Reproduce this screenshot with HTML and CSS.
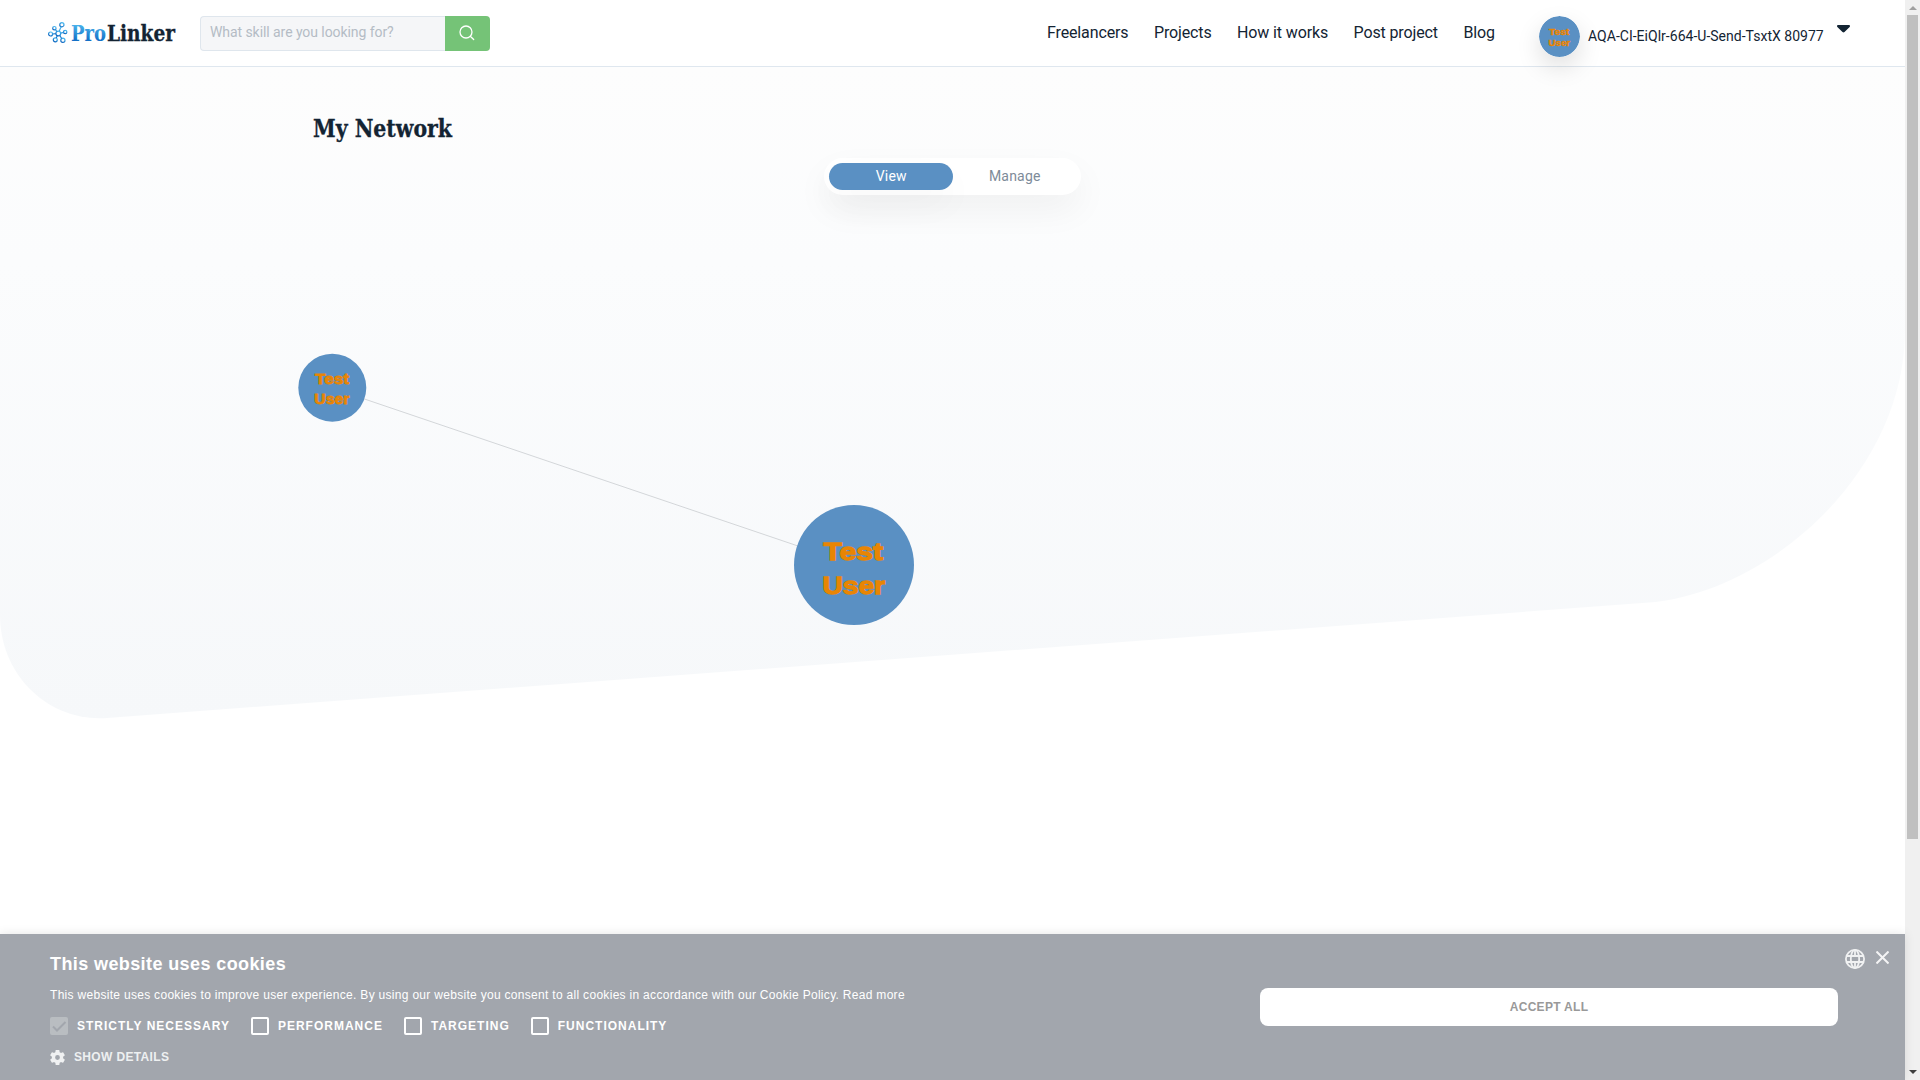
FILE: index.html
```html
<!DOCTYPE html>
<html lang="en">
<head>
<meta charset="utf-8">
<title>My Network - ProLinker</title>
<link rel="stylesheet" href="styles.css">
</head>
<body>
<div class="page">
  <header class="header">
    <a class="logo">
      <svg class="logo-mark" viewBox="0 0 20 21">
        <defs><linearGradient id="lg" x1="0.8" y1="0" x2="0.2" y2="1"><stop offset="0" stop-color="#4fc0f5"/><stop offset="1" stop-color="#0a62bd"/></linearGradient></defs>
        <g fill="none" stroke="url(#lg)" stroke-width="1.2">
          <circle cx="10.3" cy="11.5" r="2.4"/><circle cx="13.9" cy="2.700" r="2.1"/><circle cx="6.400" cy="6.200" r="1.700"/><circle cx="2.600" cy="12" r="2"/><circle cx="7.300" cy="17.800" r="2"/><circle cx="14.900" cy="18.200" r="2.100"/><circle cx="17.200" cy="10" r="1.700"/>
          <path d="M13.200 4.600 11.200 9.300M7.400 7.500 8.900 9.600M4.500 12 8 11.700M8.100 16 9.400 13.700M13.700 16.500 11.700 13.400M15.500 10.300 12.600 11.100"/>
        </g>
      </svg>
      <svg class="logo-text" viewBox="0 0 112 28">
        <defs><linearGradient id="tg" x1="0" y1="0" x2="0" y2="1"><stop offset="0.1" stop-color="#4db7ee"/><stop offset="0.9" stop-color="#0a64c0"/></linearGradient></defs>
        <text class="slab" x="0" y="19" textLength="35" lengthAdjust="spacingAndGlyphs" fill="url(#tg)">Pro</text>
        <text class="slab dark" x="36" y="19" textLength="68" lengthAdjust="spacingAndGlyphs">Linker</text>
      </svg>
    </a>
    <div class="search">
      <span class="search-input">What skill are you looking for?</span>
      <span class="search-btn"><svg viewBox="0 0 16 16" width="16" height="16" fill="none" stroke="#fff" stroke-width="1.3" stroke-linecap="round"><circle cx="7" cy="7" r="6"/><path d="m11.500 11.500 3.200 3"/></svg></span>
    </div>
    <nav class="nav"><a>Freelancers</a><a>Projects</a><a>How it works</a><a>Post project</a><a>Blog</a></nav>
    <div class="user">
      <svg class="avatar" viewBox="0 0 120 120"><circle cx="60" cy="60" r="60" fill="#5a90c3"/><g class="tag"><text x="29.500" y="54.500" textLength="59" lengthAdjust="spacingAndGlyphs">Test</text><text x="28" y="89" textLength="63" lengthAdjust="spacingAndGlyphs">User</text></g></svg>
      <span class="user-name">AQA-CI-EiQlr-664-U-Send-TsxtX 80977</span>
      <svg class="caret" viewBox="0 0 13 8"><path d="M1 0h11q1 0 1 1 0 .7-.6 1.200L7.500 7.100Q6.500 8 5.500 7.100L.6 2.200Q0 1.700 0 1 0 0 1 0z" fill="#132433"/></svg>
    </div>
  </header>
  <main class="main">
    <svg class="backdrop" viewBox="0 0 1905 867">
      <defs><linearGradient id="bg" x1="0" y1="0" x2="0" y2="1"><stop offset="0" stop-color="#fdfdfd"/><stop offset="0.3" stop-color="#fbfcfd"/><stop offset="1" stop-color="#f6f8fa"/></linearGradient></defs>
      <path d="M0 0H1905V263C1905 405 1770 525 1649 535.500L107 651C48 655 0 608 0 548Z" fill="url(#bg)"/>
    </svg>
    <svg class="title" viewBox="0 0 300 36"><text class="slab dark" x="0" y="25" textLength="139" lengthAdjust="spacingAndGlyphs">My Network</text></svg>
    <div class="toggle"><span class="on">View</span><span>Manage</span></div>
    <svg class="graph" viewBox="0 0 1905 560">
      <path d="M332 193 854 370" stroke="#d3d6d9" stroke-width="1"/>
      <circle cx="332.300" cy="192.700" r="34" fill="#5a90c3"/>
      <circle cx="854" cy="370" r="60" fill="#5a90c3"/>
      <g class="tag small"><text x="315" y="189.300" textLength="34" lengthAdjust="spacingAndGlyphs">Test</text><text x="314.300" y="209" textLength="35" lengthAdjust="spacingAndGlyphs">User</text></g>
      <g class="tag"><text x="823.500" y="364.500" textLength="59.500" lengthAdjust="spacingAndGlyphs">Test</text><text x="822.500" y="399" textLength="62.500" lengthAdjust="spacingAndGlyphs">User</text></g>
    </svg>
  </main>
  <section class="cookies">
    <div class="cookie-info">
      <h2>This website uses cookies</h2>
      <p>This website uses cookies to improve user experience. By using our website you consent to all cookies in accordance with our Cookie Policy. <a>Read more</a></p>
      <div class="checks">
        <label><i class="box checked"><svg viewBox="0 0 18 18"><path d="m3 9.500 4 4 8.500-8.500" fill="none" stroke="#a2a6ad" stroke-width="2"/></svg></i>STRICTLY NECESSARY</label>
        <label><i class="box"></i>PERFORMANCE</label>
        <label><i class="box"></i>TARGETING</label>
        <label><i class="box"></i>FUNCTIONALITY</label>
      </div>
      <div class="details"><svg viewBox="2 2 20 20" width="15" height="15"><path fill="#f0f1f2" d="M19.430 12.980c.04-.32.070-.64.070-.98s-.03-.66-.07-.98l2.110-1.650c.19-.15.24-.42.120-.64l-2-3.460c-.12-.22-.39-.3-.61-.22l-2.490 1c-.52-.4-1.080-.73-1.690-.98l-.38-2.650C14.460 2.180 14.250 2 14 2h-4c-.25 0-.46.180-.49.420l-.38 2.650c-.61.250-1.170.590-1.690.980l-2.490-1c-.23-.09-.49 0-.61.220l-2 3.460c-.13.220-.07.490.120.640l2.110 1.650c-.04.320-.07.650-.07.980s.03.660.07.980l-2.110 1.650c-.19.150-.24.420-.12.640l2 3.460c.12.220.39.300.61.220l2.490-1c.52.400 1.080.730 1.690.980l.38 2.650c.03.240.24.420.49.420h4c.25 0 .46-.18.490-.42l.38-2.650c.61-.25 1.170-.59 1.690-.98l2.490 1c.23.090.49 0 .61-.22l2-3.460c.12-.22.070-.49-.12-.64l-2.110-1.650zM12 15.200a3.200 3.200 0 1 1 0-6.400 3.200 3.200 0 0 1 0 6.400z"/></svg>SHOW DETAILS</div>
    </div>
    <button class="accept">ACCEPT ALL</button>
    <div class="tools">
      <svg class="globe" viewBox="0 0 20 20" fill="none" stroke="#f0f1f2" stroke-width="1.800"><circle cx="10" cy="10" r="9.100"/><ellipse cx="10" cy="10" rx="4.200" ry="9.100"/><path d="M10 1v5.500M10 13.500v5.500M1.500 7h17M1.500 13h17"/></svg>
      <svg class="close" viewBox="0 0 13 13"><path d="m.5 .5 12 12M12.500 .5 .5 12.500" stroke="#f4f4f5" stroke-width="2"/></svg>
    </div>
  </section>
</div>
<div class="scrollbar"><i class="arrow up"></i><i class="thumb"></i><i class="arrow down"></i></div>
</body>
</html>
```
FILE: styles.css
```css
* { box-sizing: border-box; }
body { margin: 0; display: flex; width: 1920px; height: 1080px; overflow: hidden; background: #fff; font-family: Roboto, sans-serif; color: #132433; }
svg { display: block; flex: none; }
.page { width: 1905px; height: 1080px; display: flex; flex-direction: column; }
.header { height: 67px; flex: none; display: flex; border-bottom: 1px solid #dfe7ef; background: #fff; padding-left: 48px; position: relative; z-index: 1; }
.logo { display: flex; width: 152px; gap: 3px; padding-top: 22px; }
.logo-mark { width: 20px; height: 21px; }
.logo-text { width: 112px; height: 28px; }
.slab { font-family: "Roboto Slab", "DejaVu Serif Condensed", "DejaVu Serif", serif; font-weight: 700; font-size: 21.500px; }
.slab.dark { fill: #132433; stroke: #132433; stroke-width: .3px; }
.search { display: flex; width: 290px; height: 35px; margin-top: 16px; }
.search-input { width: 245px; border: 1px solid #dfe6ed; border-right: 0; border-radius: 4px 0 0 4px; background: #f5f6f8; color: #b4bcc5; font-size: 14px; letter-spacing: -.07px; line-height: 31px; padding-left: 9px; white-space: nowrap; }
.search-btn { width: 45px; background: #75c377; border-radius: 0 4px 4px 0; display: flex; align-items: center; justify-content: center; padding: 0 2px 1px 0; }
.nav { display: flex; gap: 25.500px; width: 492px; margin-left: 557px; font-size: 16px; letter-spacing: -.13px; line-height: 66px; white-space: nowrap; }
.user { display: flex; white-space: nowrap; }
.avatar { width: 41px; height: 41px; margin-top: 16px; border-radius: 50%; box-shadow: 0 10px 25px rgba(0,0,0,.13); }
.user-name { width: 257px; padding-left: 8px; font-size: 14px; letter-spacing: .02px; line-height: 72px; }
.caret { width: 13px; height: 8px; margin-top: 25px; }
.tag { font-family: "Liberation Sans", sans-serif; font-weight: 700; font-size: 24.500px; fill: #e88504; stroke: #e88504; stroke-width: 1.300px; }
.tag.small { font-size: 14px; stroke-width: .8px; }
.main { height: 867px; flex: none; position: relative; display: flex; flex-direction: column; }
.backdrop { position: absolute; inset: 0; width: 1905px; height: 867px; z-index: -1; }
.title { width: 300px; height: 36px; margin: 45px 0 0 313px; }
.title .slab { font-size: 24px; }
.toggle { display: flex; align-self: flex-start; width: 257px; height: 37px; margin: 10px 0 0 824px; padding: 5px; border-radius: 19px; background: #fff; box-shadow: 0 15px 35px rgba(0,0,0,.05); font-size: 14px; letter-spacing: .2px; line-height: 27px; text-align: center; color: #7d8b99; }
.toggle span { width: 124px; padding-left: 1px; }
.toggle .on { color: #fff; background: #5a90c3; border-radius: 14px; box-shadow: 0 15px 35px rgba(0,0,0,.03); }
.graph { width: 1905px; height: 560px; }
.cookies { height: 146px; flex: none; display: flex; background: #a2a6ad; box-shadow: 0 0 10px rgba(0,0,0,.1); color: #fff; font-family: "Liberation Sans", sans-serif; padding-left: 50px; position: relative; }
.cookie-info { width: 1210px; white-space: nowrap; font-size: 12px; }
.cookies h2 { margin: 19px 0 0; font-size: 18px; line-height: 22px; letter-spacing: .4px; }
.cookies p { margin: 10px 0 0; line-height: 20px; letter-spacing: .3px; }
.checks { display: flex; gap: 21px; margin-top: 12px; font-weight: 700; letter-spacing: 1px; }
.checks label { display: flex; gap: 9px; line-height: 18px; }
.box { width: 18px; height: 18px; border: 2px solid #fff; border-radius: 2px; }
.box.checked { border: 0; background: #b9bdc1; }
.details { display: flex; align-items: center; gap: 9px; height: 16px; margin-top: 14px; font-weight: 700; color: #eef0f1; letter-spacing: .35px; }
.accept { width: 578px; height: 38px; margin-top: 54px; padding: 0; border: 0; border-radius: 8px; background: #fff; color: #999; font: 700 12px "Liberation Sans", sans-serif; letter-spacing: .3px; }
.tools { display: flex; gap: 11px; padding: 15px 0 0 7px; }
.globe { width: 20px; height: 20px; }
.close { width: 13px; height: 13px; margin-top: 2px; }
.scrollbar { width: 15px; height: 1080px; background: #f0f0f0; display: flex; flex-direction: column; align-items: center; }
.thumb { width: 11px; height: 824px; background: #c0c0c0; }
.arrow { border: 4px solid transparent; border-top-width: 0; border-bottom: 4px solid #a0a0a0; margin: 6px 0 5px; }
.arrow.down { border-bottom-width: 0; border-top: 4px solid #404040; margin: auto 0 6px; }
```
